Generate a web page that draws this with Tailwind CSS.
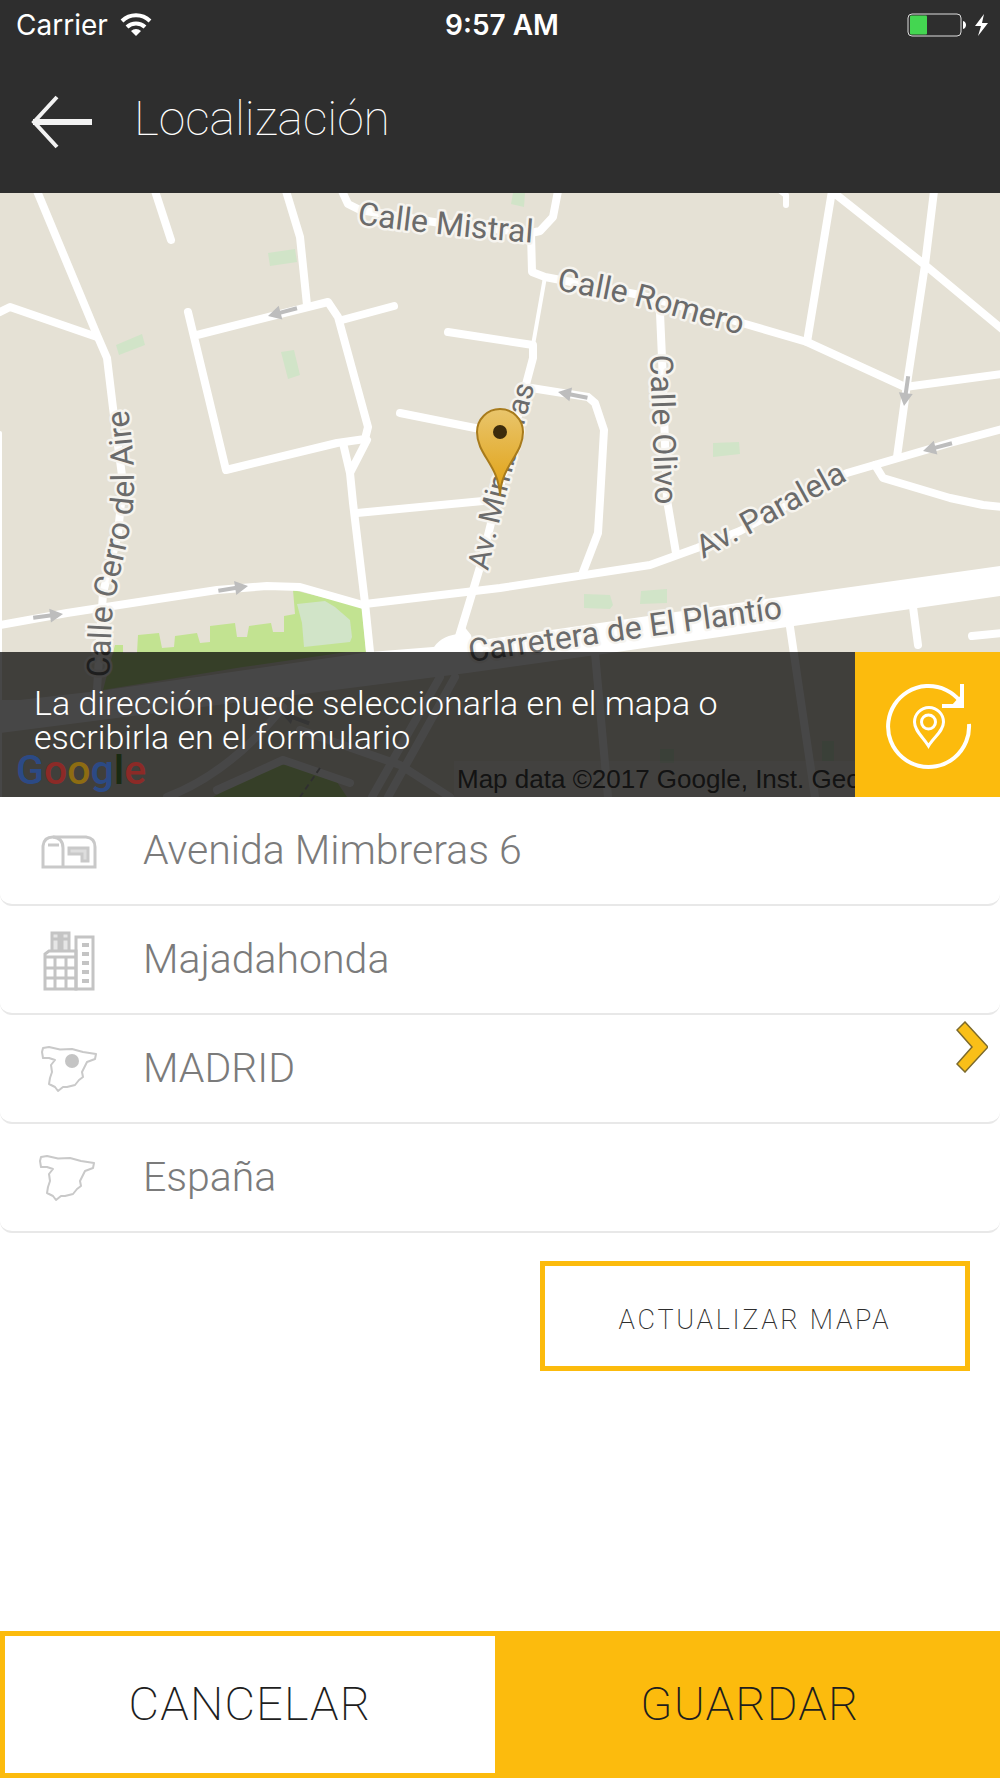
<!DOCTYPE html>
<html lang="es">
<head>
  <meta charset="UTF-8" />
  <meta name="viewport" content="width=device-width, initial-scale=1.0" />
  <title>Localización</title>
  <script src="https://cdn.jsdelivr.net/npm/@tailwindcss/browser@4"></script>
</head>
<body class="bg-white font-['Roboto',sans-serif]">
  <div class="flex min-h-screen flex-col">

    <header class="bg-[#2e2e2e] text-white">
      <!-- Barra de estado -->
      <div class="grid h-[50px] grid-cols-3 items-center pr-3 pl-4 font-['Inter',sans-serif] text-[28px]">
        <div class="flex items-center gap-3">
          <span>Carrier</span>
          <svg class="h-6 w-8" viewBox="0 0 32 24" fill="none" stroke="#fff" stroke-width="4">
            <path d="M2 8a20 20 0 0 1 28 0" />
            <path d="M7 14a13 13 0 0 1 18 0" />
            <path d="M11 18a7.500 7.500 0 0 1 10 0l-5 5z" fill="#fff" stroke="none" />
          </svg>
        </div>
        <span class="text-center font-semibold">9:57 AM</span>
        <div class="flex justify-end">
          <svg class="h-6 w-[84px]" viewBox="0 0 84 24">
            <rect x="4" y="1" width="53" height="22" rx="4" fill="none" stroke="#ddd" />
            <rect x="6" y="2.500" width="17" height="19" rx="1" fill="#44d651" />
            <path d="M59 8c4 1 4 7 0 8z" fill="#fff" />
            <path d="M80 1L71 13h6l-3 10 10-13h-6z" fill="#fff" />
          </svg>
        </div>
      </div>
      <div class="flex h-[143px] items-center px-7">
        <button type="button" aria-label="Volver" class="mr-[42px]">
          <svg class="h-14 w-16" viewBox="0 0 64 56" fill="none" stroke="#f2f2f2">
            <path d="M29 3L6 28l23 25" stroke-width="4" />
            <path d="M5 28h59" stroke-width="6" />
          </svg>
        </button>
        <h1 class="pb-1.5 text-5xl font-thin">Localización</h1>
      </div>
    </header>

    <section class="relative h-[604px] overflow-hidden bg-[#e5e1d5]">
      <svg class="h-full w-full" viewBox="0 0 1000 604" preserveAspectRatio="xMidYMid slice">
        <defs>
          <linearGradient id="pin" x1="0" y1="0" x2="0" y2="1">
            <stop offset="0" stop-color="#e9c56c" />
            <stop offset="1" stop-color="#e0a010" />
          </linearGradient>
          <g id="flecha" fill="#bdbdbd">
            <path d="M0 0l13 -7v5h17v4h-17v5z" />
          </g>
          <path id="t-mistral" d="M357 31Q450 44 550 51" />
          <path id="t-romero" d="M556 97Q625 109 652 117T760 147" />
          <path id="t-olivo" d="M650 162L656 330" />
          <path id="t-paralela" d="M703 366L752 340L866 277" />
          <path id="t-mimbreras" d="M488 378Q500 320 538 180" />
          <path id="t-cerro" d="M109 485C112 445 110 420 117 395C124 360 134 330 134 290Q134 250 124 190" />
          <path id="t-plantio" d="M470 469L610 449L820 420" />
        </defs>

        <!-- Zonas verdes -->
        <g fill="#d1e4c8">
          <path d="M268 60l27-4 2 13-27 4z" />
          <path d="M116 152l26-11 3 11-26 10z" />
          <path d="M281 159l13-2 6 25-12 4z" />
          <path d="M513 0h12l-1 14-13-3z" />
          <path d="M713 250l26-1 1 12-27 3z" />
          <path d="M584 401l26 1 3 10-3 4-26-1z" />
          <path d="M641 398l26-2v14l-27 1z" />
          <path d="M660 556h14v14h-14zM822 548h12v20h-12z" />
        </g>
        <path d="M103 497L115 452h8v8h14l1-18 21-2 3 15 12-1 1-11 22-3 3 10 10-1V433l25-3 2 14h10l2-11 22-3 2 9 11 0V423l11-2-2-24 69 17 4 45-19 0-104 15z" fill="#c2e391" />
        <path d="M297 411l28-3 10 6 15 13 2 17-2 5-46 5-2-24z" fill="#d1e4c8" />
        <path d="M213 604l54-31 26-2 44 18 10 15z" fill="#c2e391" />

        <!-- Carretera de El Plantío -->
        <path d="M0 507h20L107 497 370 459 433 454 787 403 1000 373V403L787 434 617 459 467 480 0 540z" fill="#fff" />
        <path d="M433 456q6-12 24-15l6-9 8 10 4 20z" fill="#fff" />

        <!-- Calles -->
        <g fill="none" stroke="#fff" stroke-width="8" stroke-linecap="round" stroke-linejoin="round">
          <path d="M37-2L97 142 107 165 113 215 123 290 118 340 103 400 97 497" />
          <path d="M0 119L10 114 97 144" />
          <path d="M155-2L171 47" />
          <path d="M286-2L300 44 307 112" />
          <path d="M188 119L226 277 337 250 365 246 368 234 338 124 328 109 197 142" />
          <path d="M342 127L394 113" />
          <path d="M343 250L350 280 367 247M350 280L353 310 365 410 370 459" />
          <path d="M448 139L533 152V165L525 195 480 374 468 414 457 450" />
          <path d="M400 220L490 238" />
          <path d="M342-2L348 11 360 17 440 30 531 40 540 38 553 24 558-2" />
          <path d="M531 40L532 79 545 84 640 102 742 130 807 149 905 194 1002 181" />
          <path d="M545 84L533 152" stroke-width="4" />
          <path d="M525 194L588 204 595 210 604 237 600 307 598 340 583 379" />
          <path d="M660 120L662 165 667 307 676 360" />
          <path d="M832-2L807 149M833-1L925 72 1002 136M934-2L925 72 908 184 897 264" />
          <path d="M778-4L786 2V12" stroke-width="6" />
          <path d="M1002 236L950 250 895 266 847 280 740 338 697 355 650 372 500 395 365 411" />
          <path d="M875 272L883 285 950 305 983 312 1002 314" />
          <path d="M0 432L67 420 217 397 267 393 300 394 363 412" />
          <path d="M357 320L483 308" />
          <path d="M0 240V604" stroke-width="4" />
          <path d="M595 460L608 604M790 434L815 604M913 414L918 452M972 443L1002 440" />
          <path d="M167 604Q230 580 283 514M300 537L400 572 450 604M455 484L388 604M440 484L372 604M217 597L283 567 350 590" />
        </g>
        <path d="M320 575L300 604" stroke="#aaa" stroke-width="2" stroke-dasharray="6 4" />

        <!-- Sentido de circulación -->
        <use href="#flecha" transform="translate(268 123) rotate(-15)" />
        <use href="#flecha" transform="translate(558 199) rotate(11)" />
        <use href="#flecha" transform="translate(923 258) rotate(-15)" />
        <use href="#flecha" transform="translate(904 213) rotate(-82)" />
        <use href="#flecha" transform="translate(63 421) rotate(173)" />
        <use href="#flecha" transform="translate(248 393) rotate(171)" />
        <use href="#flecha" transform="translate(281 520) rotate(20)" />

        <g class="font-['Roboto',sans-serif] text-[32px]" fill="#6b6b6b" stroke="#f6f4ef" stroke-width="5" stroke-linejoin="round" paint-order="stroke">
          <text><textPath href="#t-mistral">Calle Mistral</textPath></text>
          <text><textPath href="#t-romero">Calle Romero</textPath></text>
          <text><textPath href="#t-olivo">Calle Olivo</textPath></text>
          <text><textPath href="#t-paralela">Av. Paralela</textPath></text>
          <text class="text-[30px]"><textPath href="#t-mimbreras">Av. Mimbreras</textPath></text>
          <text><textPath href="#t-cerro">Calle Cerro del Aire</textPath></text>
          <text><textPath href="#t-plantio">Carretera de El Plantío</textPath></text>
        </g>

        <rect x="454" y="568" width="546" height="36" fill="#fff" fill-opacity=".3" />
        <text x="457" y="595" class="font-['Liberation_Sans',sans-serif] text-[26px]" fill="#444">Map data ©2017 Google, Inst. Geo</text>

        <path d="M500 303C499 272 477 262 477 239A23 23 0 0 1 523 239C523 262 501 272 500 303z" fill="url(#pin)" stroke="#a87b1c" stroke-width="2" />
        <circle cx="500" cy="239" r="7" fill="#3d2c0c" />
      </svg>

      <div class="absolute inset-x-0 bottom-0 flex h-[145px]">
        <div class="relative flex-1 bg-black/72 px-[34px] pt-[34px]">
          <p class="absolute bottom-1 left-4 text-[41px] leading-[46px] font-medium text-[#2c4a85]">G<span class="text-[#8c2a27]">o</span><span class="text-[#8d6c12]">o</span>g<span class="text-[#1a2a12]">l</span><span class="text-[#8c2a27]">e</span></p>
          <p class="relative max-w-[720px] text-[34px] leading-[34px] font-light text-white">La dirección puede seleccionarla en el mapa o escribirla en el formulario</p>
        </div>
        <button type="button" aria-label="Volver a mi posición" class="w-[145px] bg-[#fcbb0d]">
          <svg class="h-full w-full" viewBox="0 0 145 145" fill="none" stroke="#fff" stroke-width="4">
            <path d="M114 72A40.500 40.500 0 1 1 105 49" />
            <path d="M107 32V54H87" stroke-width="4" />
            <path d="M107 54V42L96 54z" fill="#fff" stroke="none" />
            <path d="M73.500 94C68 85 59.500 79 59.500 70A14.500 14.500 0 0 1 88.500 70C88.500 79 79 85 73.500 94z" stroke-width="3" />
            <circle cx="73.500" cy="70" r="7" stroke-width="3" />
          </svg>
        </button>
      </div>
    </section>

    <form class="flex flex-1 flex-col text-[41px] font-light text-[#7b7b7b]">
      <div class="flex h-[109px] items-center rounded-b-xl border-b-2 border-[#e8e8e8] pl-[41px]">
        <label for="direccion" aria-label="Dirección" class="mr-[46px]">
          <svg class="h-16 w-14" viewBox="0 0 56 64" fill="none" stroke="#c9c9c9" stroke-width="3">
            <path d="M2 48V27Q3 18 12 18H45Q54 19 54 28V48z" />
            <path d="M12 18Q22 19 22 29V48M7 26h11" />
            <path d="M28 29H47V42H41V35H28z" fill="#ddd" />
          </svg>
        </label>
        <input id="direccion" type="text" value="Avenida Mimbreras 6" class="min-w-0 flex-1 bg-transparent outline-none" />
      </div>
      <div class="flex h-[109px] items-center rounded-b-xl border-b-2 border-[#e8e8e8] pl-[41px]">
        <label for="municipio" aria-label="Municipio" class="mr-[46px]">
          <svg class="h-16 w-14" viewBox="0 0 56 64" fill="none" stroke="#c4c4c4" stroke-width="3">
            <path d="M11 23V5H18V23M21 23V5H28V23M11 11H18M21 11H28" fill="#e6e6e6" />
            <path d="M4 61V26L8 23H35V61zM4 29H35" />
            <path d="M4 40H35M4 50H35M14 29V61M25 29V61" />
            <path d="M35 61V9H52V61z" />
            <path d="M41 17h7M41 26h7M41 35h7M41 44h7M41 53h7" stroke-width="4" />
          </svg>
        </label>
        <input id="municipio" type="text" value="Majadahonda" class="min-w-0 flex-1 bg-transparent outline-none" />
      </div>
      <div class="relative flex h-[109px] items-center rounded-b-xl border-b-2 border-[#e8e8e8] pl-[41px]">
        <label for="provincia" aria-label="Provincia" class="mr-[46px]">
          <svg class="h-16 w-14" viewBox="0 0 56 64" fill="none" stroke="#c9c9c9" stroke-width="2" stroke-linejoin="round">
            <path d="M2 11L8 10 19 12.500 31 12 42 15 55 17 54 22 46 25 41 35 42 40 38 43 34 48 26 50 22 50 17 54 14 50 8 47 9 41 11 35 10 28 14 23 8 21 2 21 1 15z" />
            <circle cx="31" cy="24" r="7" fill="#c4c4c4" stroke="none" />
          </svg>
        </label>
        <select id="provincia" class="min-w-0 flex-1 appearance-none bg-transparent outline-none">
          <option>MADRID</option>
        </select>
        <svg class="pointer-events-none absolute top-1.5 right-3 h-[52px] w-8" viewBox="0 0 32 52">
          <path d="M9 1L32 26 9 51 1 43 16 26 1 9z" fill="#f9bf18" stroke="#7c6a2c" stroke-width="1.500" />
        </svg>
      </div>
      <div class="flex h-[109px] items-center rounded-b-xl border-b-2 border-[#e8e8e8] pl-[41px]">
        <label for="pais" aria-label="País" class="mr-[46px]">
          <svg class="h-16 w-14" viewBox="2 0 56 64" fill="none" stroke="#c9c9c9" stroke-width="2" stroke-linejoin="round" overflow="visible">
            <path d="M2 11L8 10 19 12.500 31 12 42 15 55 17 54 22 46 25 41 35 42 40 38 43 34 48 26 50 22 50 17 54 14 50 8 47 9 41 11 35 10 28 14 23 8 21 2 21 1 15z" />
          </svg>
        </label>
        <input id="pais" type="text" value="España" class="min-w-0 flex-1 bg-transparent outline-none" />
      </div>

      <button type="button" class="mt-7 mr-[30px] h-[110px] w-[430px] self-end border-5 border-[#fcbb0d] pt-2 text-[27px] font-extralight tracking-widest text-[#2e2e2e]">ACTUALIZAR MAPA</button>
    </form>

    <footer class="grid h-[147px] grid-cols-2 text-[47px] font-extralight tracking-wide text-[#1e1e1e]">
      <button type="button" class="border-5 border-[#fcbb0d] bg-white">CANCELAR</button>
      <button type="button" class="bg-[#fcbb0d]">GUARDAR</button>
    </footer>
  </div>
</body>
</html>
